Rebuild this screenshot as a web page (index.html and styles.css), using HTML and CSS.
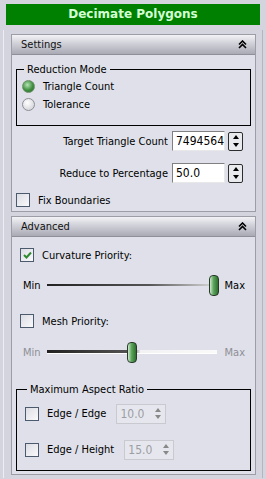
FILE: index.html
```html
<!DOCTYPE html>
<html lang="en">
<head>
    <meta charset="UTF-8">
    <title>Decimate Polygons</title>
    <link rel="stylesheet" href="styles.css">
</head>
<body>
    <div class="title">Decimate Polygons</div>

    <div class="frame">
        <!-- Settings rollout -->
        <div class="rollout">
            <div class="rollout-head">
                <span>Settings</span>
                <svg class="chev" width="9" height="9" viewBox="0 0 9 9"><path d="M1 4.5 L4.5 1 L8 4.5 M1 8 L4.5 4.5 L8 8" fill="none" stroke="#000" stroke-width="1.6"/></svg>
            </div>
            <div class="rollout-body settings">
                <fieldset class="group">
                    <legend>Reduction Mode</legend>
                    <label class="radio-row"><span class="radio on"></span>Triangle Count</label>
                    <label class="radio-row"><span class="radio"></span>Tolerance</label>
                </fieldset>

                <div class="field-row">
                    <span class="field-label">Target Triangle Count</span>
                    <span class="edit">7494564</span>
                    <span class="spin"><i class="up"></i><i class="down"></i></span>
                </div>
                <div class="field-row">
                    <span class="field-label">Reduce to Percentage</span>
                    <span class="edit">50.0</span>
                    <span class="spin"><i class="up"></i><i class="down"></i></span>
                </div>

                <label class="check-row fix"><span class="check"></span>Fix Boundaries</label>
            </div>
        </div>

        <!-- Advanced rollout -->
        <div class="rollout">
            <div class="rollout-head">
                <span>Advanced</span>
                <svg class="chev" width="9" height="9" viewBox="0 0 9 9"><path d="M1 4.5 L4.5 1 L8 4.5 M1 8 L4.5 4.5 L8 8" fill="none" stroke="#000" stroke-width="1.6"/></svg>
            </div>
            <div class="rollout-body advanced">
                <label class="check-row"><span class="check">
                    <svg width="9" height="8" viewBox="0 0 9 8"><path d="M1 4 L3.5 6.5 L8 1.5" fill="none" stroke="#2f8a2f" stroke-width="2"/></svg>
                </span>Curvature Priority:</label>

                <div class="slider-row first">
                    <span class="s-min">Min</span>
                    <div class="slider">
                        <div class="track"></div>
                        <div class="thumb" style="left: 100%"></div>
                    </div>
                    <span class="s-max">Max</span>
                </div>

                <label class="check-row"><span class="check"></span>Mesh Priority:</label>

                <div class="slider-row disabled">
                    <span class="s-min">Min</span>
                    <div class="slider">
                        <div class="track"></div>
                        <div class="thumb" style="left: 50%"></div>
                    </div>
                    <span class="s-max">Max</span>
                </div>

                <fieldset class="group aspect">
                    <legend>Maximum Aspect Ratio</legend>
                    <div class="aspect-row">
                        <label class="check-row"><span class="check"></span>Edge / Edge</label>
                        <span class="edit small off">10.0<span class="spin mini"><i class="up"></i><i class="down"></i></span></span>
                    </div>
                    <div class="aspect-row">
                        <label class="check-row"><span class="check"></span>Edge / Height</label>
                        <span class="edit small off">15.0<span class="spin mini"><i class="up"></i><i class="down"></i></span></span>
                    </div>
                </fieldset>
            </div>
        </div>
    </div>
</body>
</html>
```

FILE: styles.css
```css
body {
    margin: 0;
    padding: 4px 6px 0;
    background-color: #d3d4dd;
    font-family: "DejaVu Sans Condensed", "Liberation Sans", sans-serif;
    font-size: 11px;
    color: #000;
    height: 475px;
    overflow: hidden;
}
.title {
    height: 21px;
    line-height: 21px;
    background-color: #008000;
    color: #d4ffd4;
    font-family: "DejaVu Sans", sans-serif;
    font-weight: 700;
    text-align: center;
    font-size: 12px;
}
.frame {
    margin: 5px -3px 0;
    padding: 4px 6px 3px 7px;
    border-left: 1px solid #eceef3;
    border-right: 1px solid #b4b5be;
    display: flex;
    flex-direction: column;
    gap: 4px;
}
.rollout {
    border: 1px solid #9c9da7;
    background-color: #dfe0e9;
}
.rollout-head {
    height: 19px;
    display: flex;
    align-items: center;
    justify-content: space-between;
    padding: 0 8px 0 9px;
    background: linear-gradient(#f3f3f6, #cfd0d8 45%, #a9aab4);
    border-bottom: 1px solid #8e8f99;
    color: #111;
}
.chev {
    display: block;
}
.rollout-body {
    padding: 8px 4px 2px;
}
.group {
    margin: 0;
    border: 1px solid #000;
    padding: 1px 6px 12px 5px;
}
.group legend {
    padding: 0 3px;
    margin-left: 2px;
}
.radio-row, .check-row {
    display: flex;
    align-items: center;
    gap: 8px;
    height: 18px;
}
.radio {
    width: 11px;
    height: 11px;
    border-radius: 50%;
    border: 1px solid #8d8e95;
    background: radial-gradient(circle at 40% 35%, #ffffff, #c9cad0);
}
.radio.on {
    background: radial-gradient(circle at 40% 35%, #b5e3b5, #3f8f3f 55%, #2a6a2a);
    border-color: #6b8f6b;
}
.field-row {
    display: flex;
    align-items: center;
    justify-content: flex-end;
    padding-right: 8px;
    height: 20px;
}
.settings .field-row + .field-row {
    margin-top: 12px;
}
.settings fieldset + .field-row {
    margin-top: 5px;
}
.field-label {
    margin-right: 4px;
}
.edit {
    width: 48px;
    height: 18px;
    line-height: 18px;
    padding-left: 3px;
    background-color: #fff;
    border: 1px solid #7f9db9;
    border-color: #808080 #e8e8e8 #e8e8e8 #808080;
    font-size: 12px;
    display: flex;
    align-items: center;
}
.spin {
    width: 13px;
    height: 17px;
    margin-left: 3px;
    border: 1px solid #2d2d2d;
    border-radius: 2px;
    background-color: #e9eaee;
    display: flex;
    flex-direction: column;
    align-items: center;
    justify-content: space-around;
}
.spin i {
    width: 0;
    height: 0;
    border-left: 3px solid transparent;
    border-right: 3px solid transparent;
}
.spin .up {
    border-bottom: 4px solid #000;
}
.spin .down {
    border-top: 4px solid #000;
}
.fix {
    margin-top: 8px;
}
.check {
    width: 12px;
    height: 12px;
    border: 1px solid #4b5a6c;
    background: linear-gradient(135deg, #dcdde4, #fafafc);
    display: flex;
    align-items: center;
    justify-content: center;
}
.advanced {
    padding: 9px 4px 3px;
}
.advanced > .check-row {
    padding-left: 4px;
}
.slider-row {
    display: flex;
    align-items: center;
    height: 24px;
    margin: 10px 0 12px;
    padding: 0 6px 0 7px;
}
.slider-row.first {
    margin: 9px 0 15px;
}
.slider-row.disabled {
    margin-bottom: 19px;
}
.s-min {
    width: 24px;
}
.s-max {
    margin-left: 8px;
}
.slider {
    flex: 1;
    position: relative;
    height: 20px;
}
.track {
    position: absolute;
    left: 0;
    right: 0;
    top: 9px;
    height: 2px;
    background: linear-gradient(90deg, #222 0%, #555 60%, #ddd 100%);
}
.thumb {
    position: absolute;
    top: 0;
    width: 8px;
    height: 19px;
    margin-left: -8px;
    border-radius: 4px;
    border: 1px solid #2a3a2a;
    background: linear-gradient(90deg, #cfe8cf, #5aa35a 45%, #2f6f2f);
}
.disabled .thumb {
    margin-left: -5px;
}
.disabled .s-min, .disabled .s-max {
    color: #8e8f96;
}
.disabled .track {
    background: linear-gradient(90deg, #222 0%, #555 50%, #f2f2f4 55%, #fafafa 100%);
    border-bottom: 1px solid #fff;
    top: 8px;
    height: 3px;
}
.aspect {
    margin-top: 2px;
    padding: 7px 6px 10px 8px;
}
.aspect-row {
    display: flex;
    align-items: center;
    gap: 10px;
    height: 21px;
}
.aspect-row + .aspect-row {
    margin-top: 15px;
}
.edit.small.off {
    width: 44px;
    background-color: #e6e7ee;
    color: #9c9da3;
    border-color: #c9cad0;
    justify-content: space-between;
    padding-right: 1px;
}
.spin.mini {
    width: 12px;
    height: 14px;
    border: none;
    background: none;
}
.spin.mini .up {
    border-bottom-color: #888;
}
.spin.mini .down {
    border-top-color: #888;
}
```
